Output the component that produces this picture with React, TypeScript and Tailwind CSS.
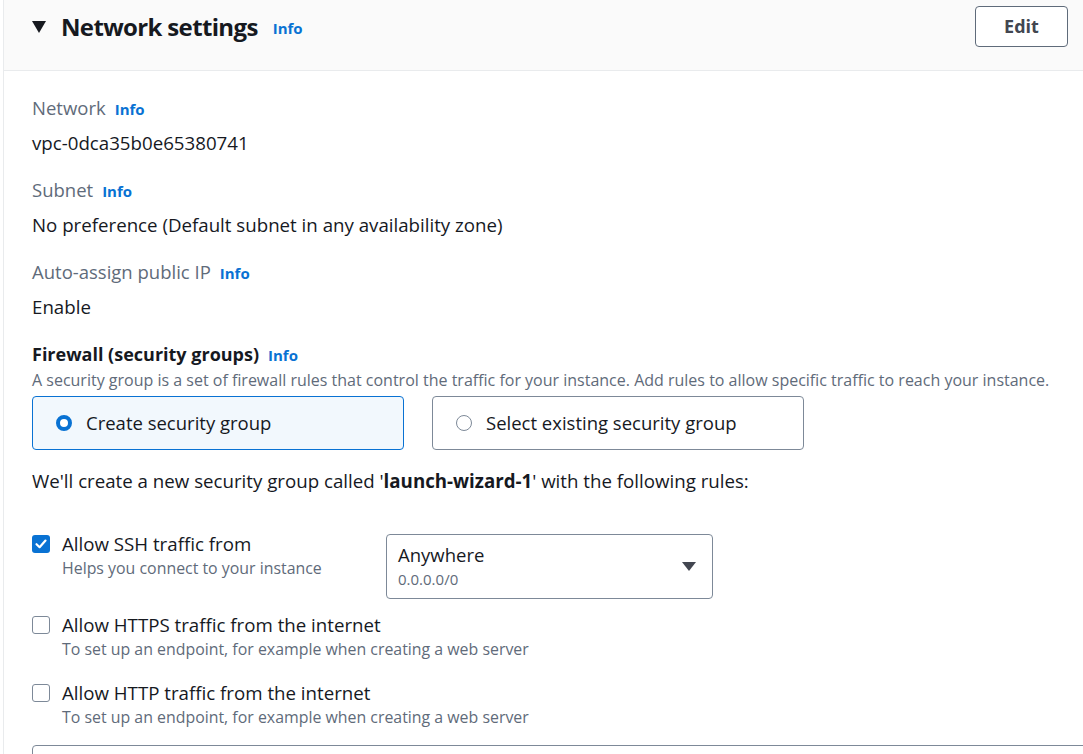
import React from "react";

const font = { fontFamily: "'Open Sans', Roboto, sans-serif" };

function InfoLink() {
	return <span className="ml-[9px] text-[15px] font-bold text-[#0972d3]">Info</span>;
}

function Field({ label, value, top }: { label: string; value: string; top: string }) {
	return (
		<div className={top}>
			<div className="flex items-baseline h-[24px] text-[18.5px] leading-[24px] text-[#5f6b7a]">
				{label}
				<InfoLink />
			</div>
			<div className="mt-[11px] h-[24px] text-[18.7px] leading-[24px] text-[#16191f]">{value}</div>
		</div>
	);
}

function Checkbox({ checked }: { checked?: boolean }) {
	if (checked) {
		return (
			<span className="flex h-[18px] w-[18px] items-center justify-center rounded-[3px] bg-[#0972d3]">
				<svg width="14" height="14" viewBox="0 0 14 14" fill="none">
					<path d="M2.5 7.2 L5.6 10.2 L11.5 3.6" stroke="white" strokeWidth="2.2" strokeLinecap="round" strokeLinejoin="round" />
				</svg>
			</span>
		);
	}
	return <span className="block h-[18px] w-[18px] rounded-[3px] border-[1.5px] border-[#7d8998] bg-white" />;
}

function Rule({ label, desc, checked, top }: { label: string; desc: string; checked?: boolean; top: string }) {
	return (
		<div className={`flex ${top}`}>
			<div className="pt-[3px]">
				<Checkbox checked={checked} />
			</div>
			<div className="ml-[12px]">
				<div className="text-[18.7px] leading-[24px] text-[#16191f]">{label}</div>
				<div className="mt-[2px] text-[15.9px] leading-[20px] text-[#5f6b7a]">{desc}</div>
			</div>
		</div>
	);
}

export default function App() {
	return (
		<div className="h-[754px] w-[1083px] overflow-hidden bg-white pl-[3px]" style={font}>
			<div className="h-full border-l border-[#e9ebed]">
				<div className="h-[71px] border-b border-[#e9ebed] bg-[#fafafa] pl-[28px] pr-[15px] pt-[6px]">
					<div className="flex h-[41px] items-center justify-between">
						<div className="flex items-center">
							<svg width="14" height="12" viewBox="0 0 14 12" className="mr-[15px]">
								<path d="M0 0 H14 L7 12 Z" fill="#16191f" />
							</svg>
							<span className="text-[24px] font-bold leading-[30px] tracking-[-0.65px] text-[#16191f]">Network settings</span>
							<span className="ml-[15px] mt-[3px] text-[15px] font-bold text-[#0972d3]">Info</span>
						</div>
						<button className="h-[41px] w-[93px] rounded-[4px] border border-[#5f6b7a] bg-white text-[18px] font-bold text-[#424650]">
							Edit
						</button>
					</div>
				</div>

				<div className="pl-[28px]">
					<Field label="Network" value="vpc-0dca35b0e65380741" top="pt-[25px]" />
					<Field label="Subnet" value="No preference (Default subnet in any availability zone)" top="mt-[23px]" />
					<Field label="Auto-assign public IP" value="Enable" top="mt-[23px]" />

					<div className="mt-[23px] flex items-baseline h-[24px] text-[18px] font-bold leading-[24px] text-[#16191f]">
						Firewall (security groups)
						<InfoLink />
					</div>
					<div className="mt-[4px] text-[16px] leading-[20px] text-[#5f6b7a]">
						A security group is a set of firewall rules that control the traffic for your instance. Add rules to allow specific traffic to reach your instance.
					</div>

					<div className="mt-[6px] flex gap-[28px]">
						<div className="flex h-[54px] w-[372px] items-center rounded-[4px] border border-[#0972d3] bg-[#f2f8fd] pl-[23px]">
							<span className="h-[16px] w-[16px] rounded-full border-[4.5px] border-[#0972d3] bg-white" />
							<span className="ml-[14px] text-[18.5px] text-[#16191f]">Create security group</span>
						</div>
						<div className="flex h-[54px] w-[372px] items-center rounded-[4px] border border-[#7d8998] bg-white pl-[23px]">
							<span className="h-[16px] w-[16px] rounded-full border-[1.5px] border-[#7d8998] bg-white" />
							<span className="ml-[14px] text-[18.5px] text-[#16191f]">Select existing security group</span>
						</div>
					</div>

					<div className="mt-[19px] text-[18.7px] leading-[24px] text-[#16191f]">
						We'll create a new security group called '<span className="font-bold">launch-wizard-1</span>' with the following rules:
					</div>

					<div className="mt-[39px] flex">
						<div className="w-[354px]">
							<Rule label="Allow SSH traffic from" desc="Helps you connect to your instance" checked top="" />
						</div>
						<div className="mt-[2px] flex h-[65px] w-[327px] items-center justify-between rounded-[4px] border border-[#7d8998] pl-[11px] pr-[16px]">
							<div className="self-start pt-[8px]">
								<div className="text-[18.5px] leading-[24px] text-[#16191f]">Anywhere</div>
								<div className="mt-[2px] text-[15px] leading-[20px] text-[#5f6b7a]">0.0.0.0/0</div>
							</div>
							<svg width="14" height="10" viewBox="0 0 14 10">
								<path d="M0 0 H14 L7 9 Z" fill="#424650" />
							</svg>
						</div>
					</div>

					<Rule label="Allow HTTPS traffic from the internet" desc="To set up an endpoint, for example when creating a web server" top="mt-[14px]" />
					<Rule label="Allow HTTP traffic from the internet" desc="To set up an endpoint, for example when creating a web server" top="mt-[22px]" />

					<div className="mt-[18px] h-[60px] w-[1060px] rounded-[4px] border border-[#7d8998]" />
				</div>
			</div>
		</div>
	);
}
